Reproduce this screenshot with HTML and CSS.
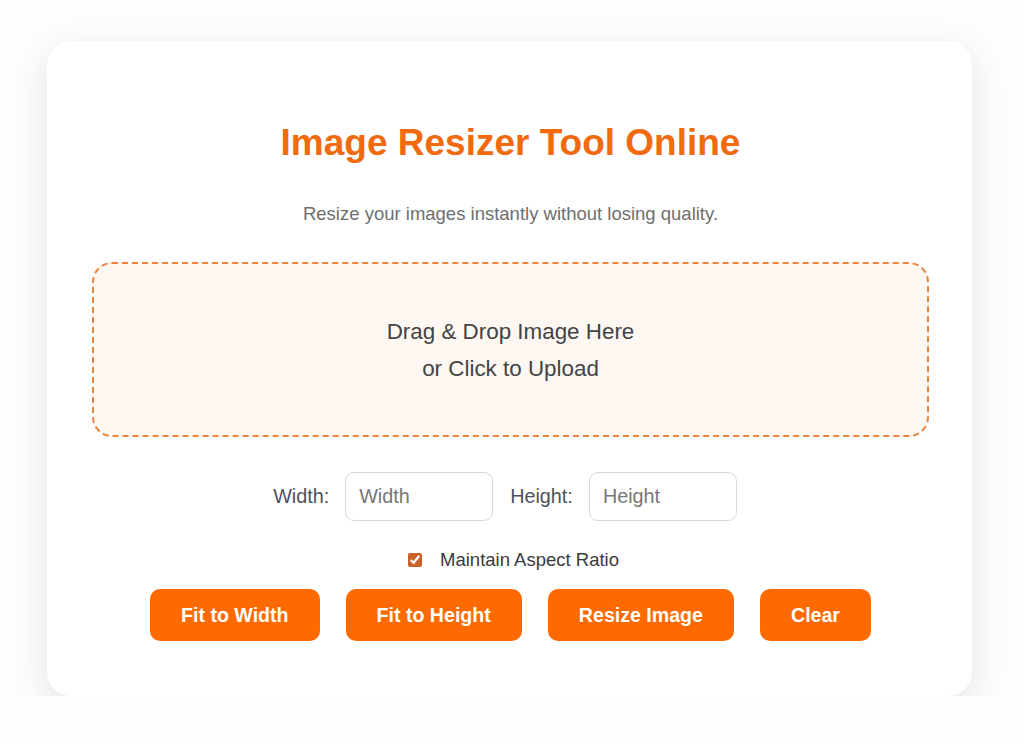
FILE: index.html
```html
<!DOCTYPE html>
<html>
<head>
<meta charset="utf-8">
<link rel="stylesheet" href="styles.css">
</head>
<body>
<div class="card">
  <h1 class="title">Image Resizer Tool Online</h1>
  <p class="subtitle">Resize your images instantly without losing quality.</p>
  <div class="dropzone">
    <p>Drag &amp; Drop Image Here<br>or Click to Upload</p>
  </div>
  <div class="dims">
    <label class="lbl">Width:</label>
    <input class="field" type="text" placeholder="Width">
    <label class="lbl lbl-second">Height:</label>
    <input class="field" type="text" placeholder="Height">
  </div>
  <div class="ratio">
    <input type="checkbox" class="check" checked>
    <span>Maintain Aspect Ratio</span>
  </div>
  <div class="buttons">
    <button class="btn">Fit to Width</button>
    <button class="btn">Fit to Height</button>
    <button class="btn">Resize Image</button>
    <button class="btn">Clear</button>
  </div>
</div>
</body>
</html>
```

FILE: styles.css
```css
html, body {
  margin: 0;
  padding: 0;
  background: #fdfdfd;
  font-family: "Liberation Sans", Arial, sans-serif;
}
body {
  padding-top: 41px;
  padding-left: 47px;
}
.card {
  width: 925px;
  height: 655px;
  box-sizing: border-box;
  background: #ffffff;
  border-radius: 24px;
  box-shadow: 0 10px 36px rgba(0, 0, 0, 0.1);
  padding: 0 43px 0 45px;
  display: flex;
  flex-direction: column;
  align-items: center;
}
.title {
  margin: 82px 0 0;
  font-size: 37px;
  line-height: 40px;
  font-weight: 700;
  color: #f26a0e;
}
.subtitle {
  margin: 40px 0 0;
  font-size: 18.5px;
  line-height: 22px;
  color: #6f6f6f;
}
.dropzone {
  margin-top: 37px;
  width: 100%;
  height: 175px;
  box-sizing: border-box;
  border: 2px dashed #e8843e;
  border-radius: 20px;
  background: #fff7f1;
  display: flex;
  align-items: center;
  justify-content: center;
}
.dropzone p {
  margin: 0;
  text-align: center;
  font-size: 22.4px;
  line-height: 37px;
  color: #444444;
}
.dims {
  margin-top: 35px;
  display: flex;
  align-items: center;
}
.lbl {
  font-size: 19.8px;
  color: #4a5260;
  margin-right: 16px;
}
.lbl-second {
  margin-left: 6px;
}
.field {
  width: 148px;
  height: 49px;
  box-sizing: border-box;
  border: 1px solid #d9d9d9;
  border-radius: 9px;
  padding: 0 13px;
  font-family: "Liberation Sans", Arial, sans-serif;
  font-size: 19.8px;
  color: #333;
  outline: none;
  margin-right: 11px;
}
.field::placeholder {
  color: #777777;
}
.ratio {
  margin-top: 28px;
  margin-left: 6px;
  display: flex;
  align-items: center;
  gap: 18px;
  font-size: 18.5px;
  line-height: 21px;
  color: #3a3a3a;
}
.check {
  margin: 0;
  width: 14px;
  height: 14px;
  accent-color: #c8622a;
}
.buttons {
  margin-top: 19px;
  display: flex;
  gap: 26px;
}
.btn {
  height: 52px;
  padding: 0 31px;
  border: none;
  border-radius: 10px;
  background: #ff6a00;
  color: #ffffff;
  font-family: "Liberation Sans", Arial, sans-serif;
  font-size: 19.6px;
  font-weight: 700;
}
```
